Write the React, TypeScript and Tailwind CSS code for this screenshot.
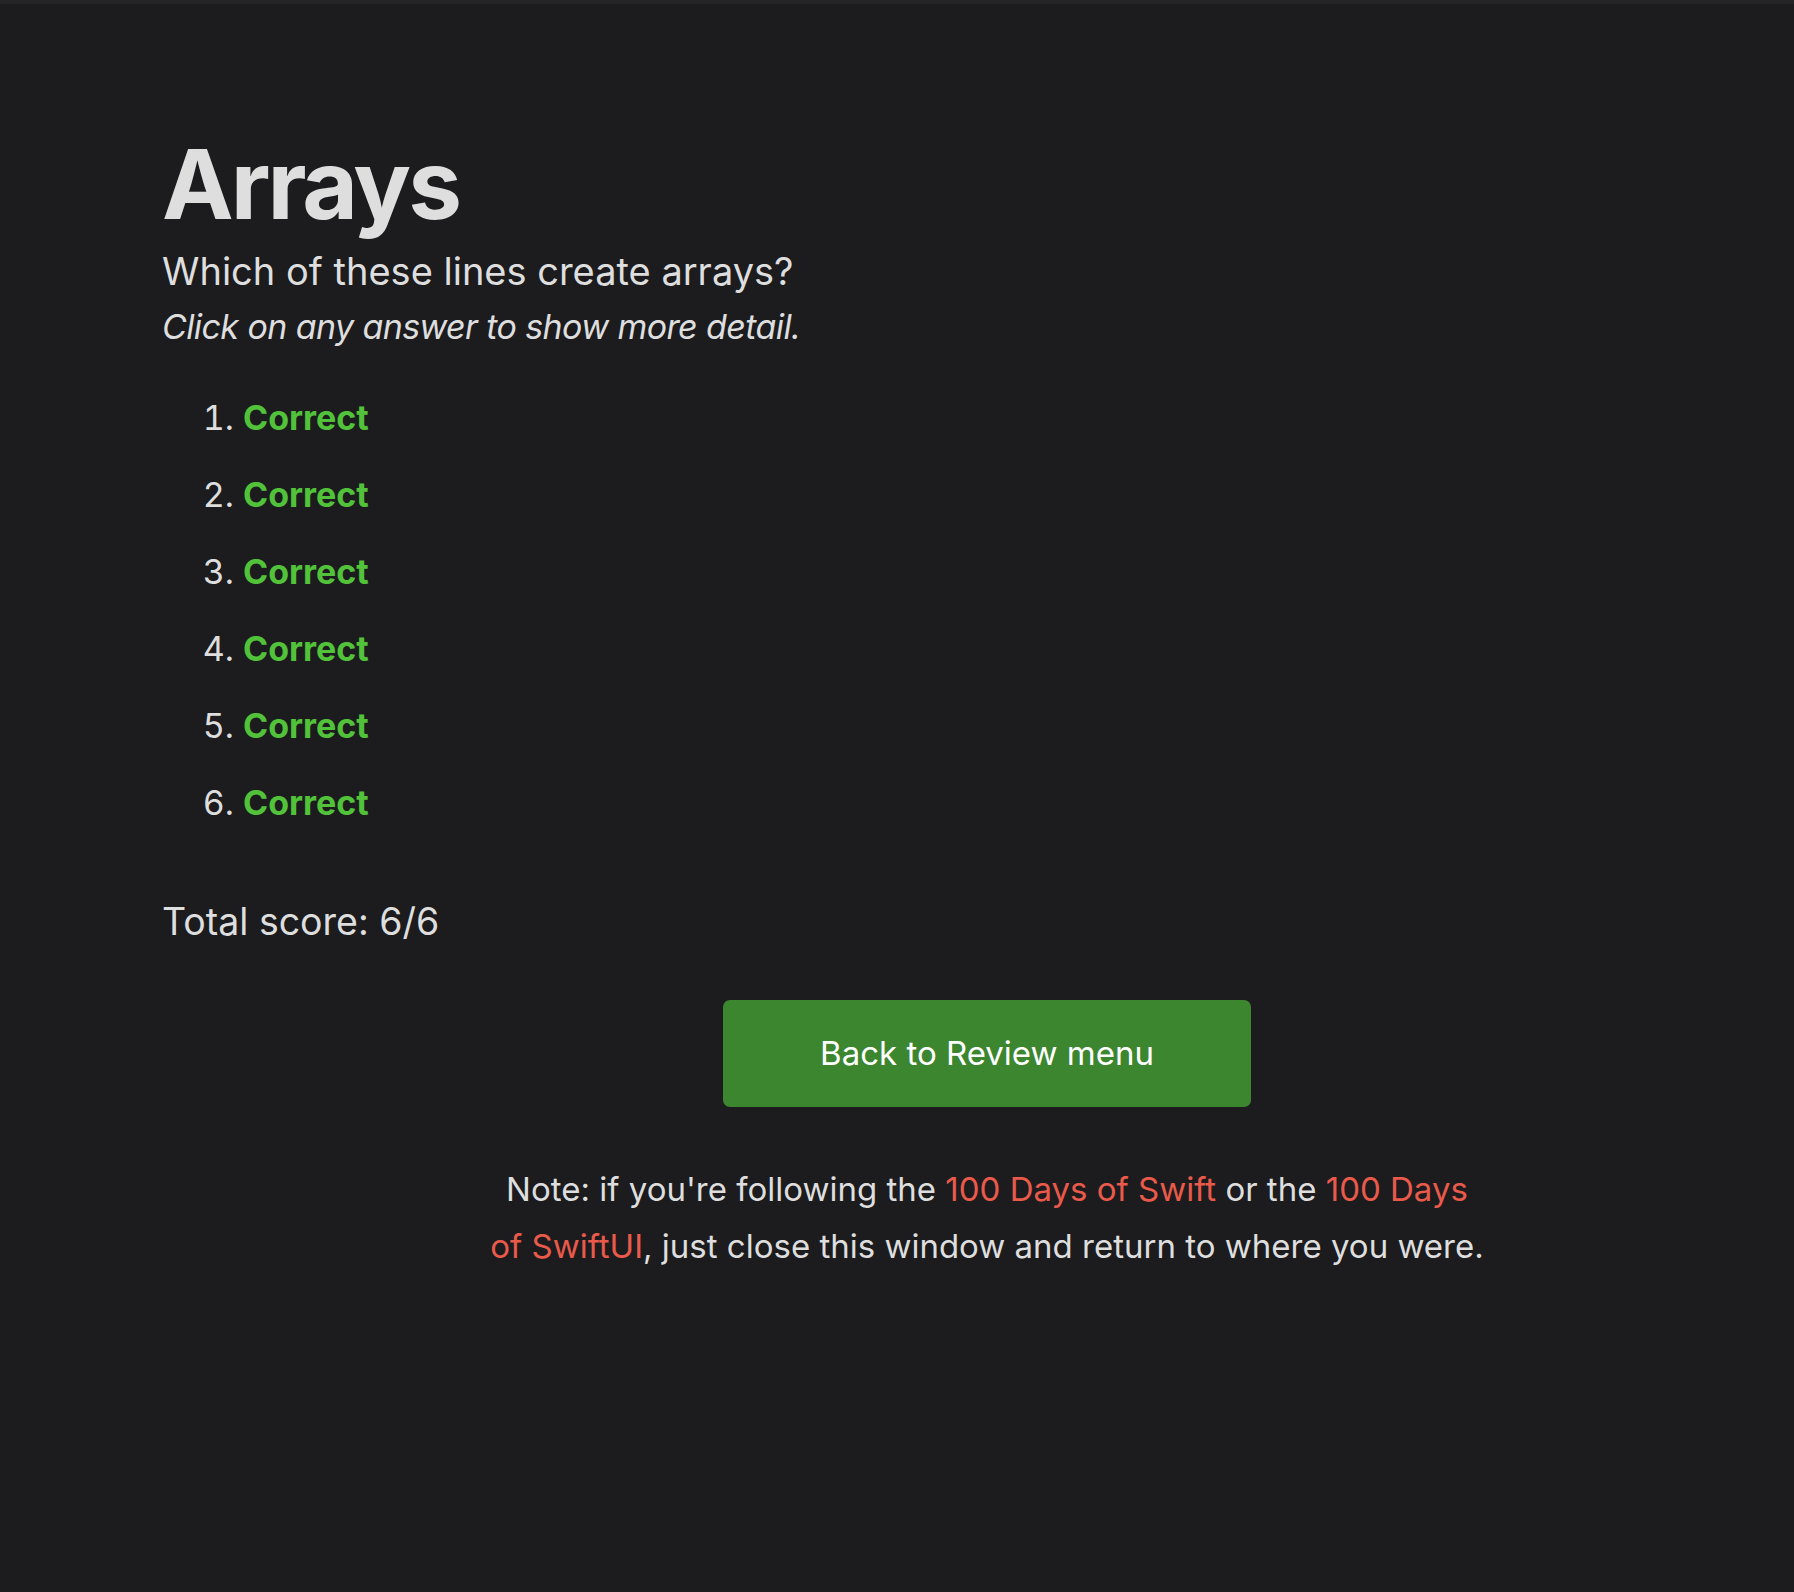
export default function App() {
  const items = [1, 2, 3, 4, 5, 6];

  return (
    <div className="min-h-[1592px] w-full bg-[#1c1c1e] text-[#dedede] font-['Inter','Noto_Sans',sans-serif]">
      <div className="h-[4px] bg-[#252527]" />
      <main className="pl-[162px] pt-[121px]">
        <h1 className="text-[96px] font-bold leading-[118px] tracking-[-3px]">Arrays</h1>
        <h2 className="text-[38px] leading-[48px] mt-[4px]">Which of these lines create arrays?</h2>
        <p className="text-[34px] italic leading-[56px] mt-[4px] tracking-[-0.6px]">
          Click on any answer to show more detail.
        </p>

        <ol className="list-decimal pl-[81px] mt-[41px] text-[34px] leading-[44px]">
          {items.map((n) => (
            <li key={n} className="mb-[33px] marker:text-[#dedede]">
              <button className="font-bold text-[#52c23a]">Correct</button>
            </li>
          ))}
        </ol>

        <p className="text-[37.5px] leading-[48px] mt-[73px]">Total score: 6/6</p>
      </main>

      <div className="flex flex-col items-center pl-[180px] mt-[54px]">
        <button className="w-[528px] h-[107px] rounded-[7px] bg-[#3b862f] text-white text-[33px]">
          Back to Review menu
        </button>
        <p className="w-[1000px] text-center text-[33px] leading-[57px] mt-[54px]">
          Note: if you're following the <span className="text-[#e95a4b]">100 Days of Swift</span> or the{" "}
          <span className="text-[#e95a4b]">100 Days of SwiftUI</span>, just close this window and return to where you
          were.
        </p>
      </div>
    </div>
  );
}
